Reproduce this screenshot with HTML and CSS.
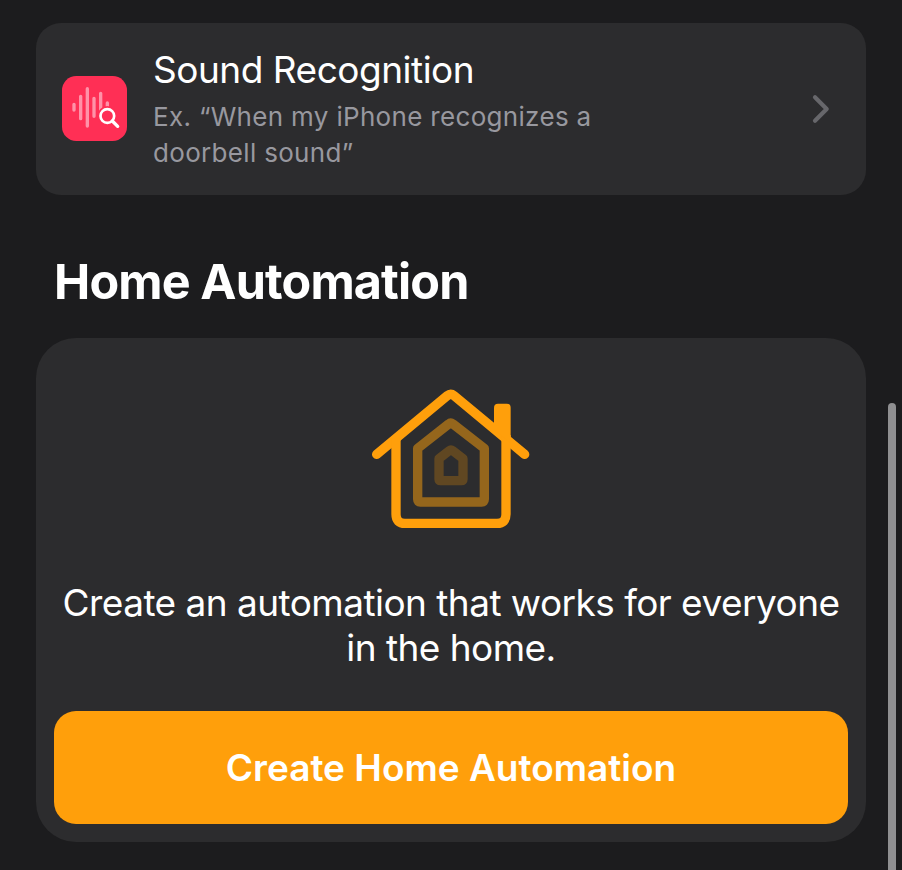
FILE: index.html
```html
<!DOCTYPE html>
<html lang="en">
<head>
<meta charset="utf-8">
<title>Automation</title>
<link rel="stylesheet" href="styles.css">
</head>
<body>
<main class="page">
  <a class="trigger">
    <svg class="trigger-icon" viewBox="36 37 195 195" aria-hidden="true">
      <rect x="36" y="37" width="195" height="195" rx="43" fill="#ff2f55"/>
      <path d="M72 122V139M92 98V165M112 75V187M132 104V158M152 89V150M172 118V128" fill="none" stroke="#ff92a8" stroke-width="10" stroke-linecap="round"/>
      <circle cx="172" cy="157" r="30" fill="#ff2f55"/>
      <circle cx="172" cy="157" r="20.5" fill="none" stroke="#fff" stroke-width="8"/>
      <path d="M187 172L203 188" stroke="#fff" stroke-width="10" stroke-linecap="round"/>
    </svg>
    <div class="trigger-text">
      <h3 class="trigger-title">Sound Recognition</h3>
      <p class="trigger-example">Ex. “When my iPhone recognizes a<br>doorbell sound”</p>
    </div>
    <svg class="chevron" viewBox="0 0 18 30" aria-hidden="true">
      <path d="M3 3.2L14.7 15L3 26.8" fill="none" stroke="#67676b" stroke-width="4.2" stroke-linecap="round" stroke-linejoin="round"/>
    </svg>
  </a>
  <h2 class="section-title">Home Automation</h2>
  <section class="home-card">
    <svg class="house" viewBox="0 0 540 480" aria-hidden="true">
      <g fill="none" stroke-width="28" stroke-linejoin="round">
        <g stroke="#ff9f0b">
          <path d="M50 223L262 47Q272 39 282 47L494 223" stroke-linecap="round"/>
          <path d="M108 176V403Q108 430 135 430H411Q438 430 438 403V165"/>
        </g>
        <path d="M402 148V83Q402 71 414 71H440Q452 71 452 83V190Z" fill="#ff9f0b"/>
        <path d="M173 205L266 132Q272 127 279 132L373 205V358Q373 366 365 366H181Q173 366 173 358Z" stroke="#95661c"/>
        <path d="M237 236L268 212Q273 208 278 212L309 236V298Q309 302 305 302H241Q237 302 237 298Z" stroke="#604722"/>
      </g>
    </svg>
    <p class="home-text">Create an automation that works for everyone<br>in the home.</p>
    <button class="create" type="button">Create Home Automation</button>
  </section>
</main>
<div class="scrollbar"></div>
</body>
</html>
```
FILE: styles.css
```css
* { box-sizing: border-box; margin: 0; }
body {
  height: 870px;
  overflow: hidden;
  position: relative;
  background: #1c1c1e;
  color: #fff;
  font-family: Inter, "Liberation Sans", sans-serif;
}
.page { padding: 22.5px 36px 0; }
.trigger {
  display: flex;
  align-items: center;
  height: 172.5px;
  padding: 0 36px 0 26px;
  border-radius: 25px;
  background: #2c2c2e;
}
.trigger-icon { width: 65px; height: 65px; flex: none; }
.trigger-text { flex: 1; padding-left: 26px; white-space: nowrap; }
.trigger-title { font-size: 37px; font-weight: 400; line-height: 46px; letter-spacing: -0.49px; }
.trigger-example { margin-top: 6px; color: #98989f; font-size: 26px; line-height: 36px; letter-spacing: 0.32px; }
.chevron { width: 18px; height: 30px; flex: none; }
.section-title { margin: 57px 0 0 18px; height: 86px; font-size: 48.5px; font-weight: 700; line-height: 60px; letter-spacing: -0.85px; white-space: nowrap; }
.home-card {
  display: flex;
  flex-direction: column;
  align-items: center;
  height: 504px;
  padding: 42px 18px 18px;
  border-radius: 40px;
  background: #2c2c2e;
}
.house { width: 180px; height: 160px; margin-right: 2px; flex: none; }
.home-text { margin-top: 40px; font-size: 37px; line-height: 45px; letter-spacing: -0.54px; text-align: center; white-space: nowrap; }
.create {
  width: 100%;
  height: 113px;
  margin-top: auto;
  border: 0;
  border-radius: 22px;
  background: #ff9f0b;
  color: #fff;
  font: 600 37px/1 Inter, "Liberation Sans", sans-serif;
}
.scrollbar {
  position: absolute;
  top: 403px;
  right: 6px;
  bottom: -10px;
  width: 8px;
  border-radius: 4px;
  background: #8f8f91;
}
```
